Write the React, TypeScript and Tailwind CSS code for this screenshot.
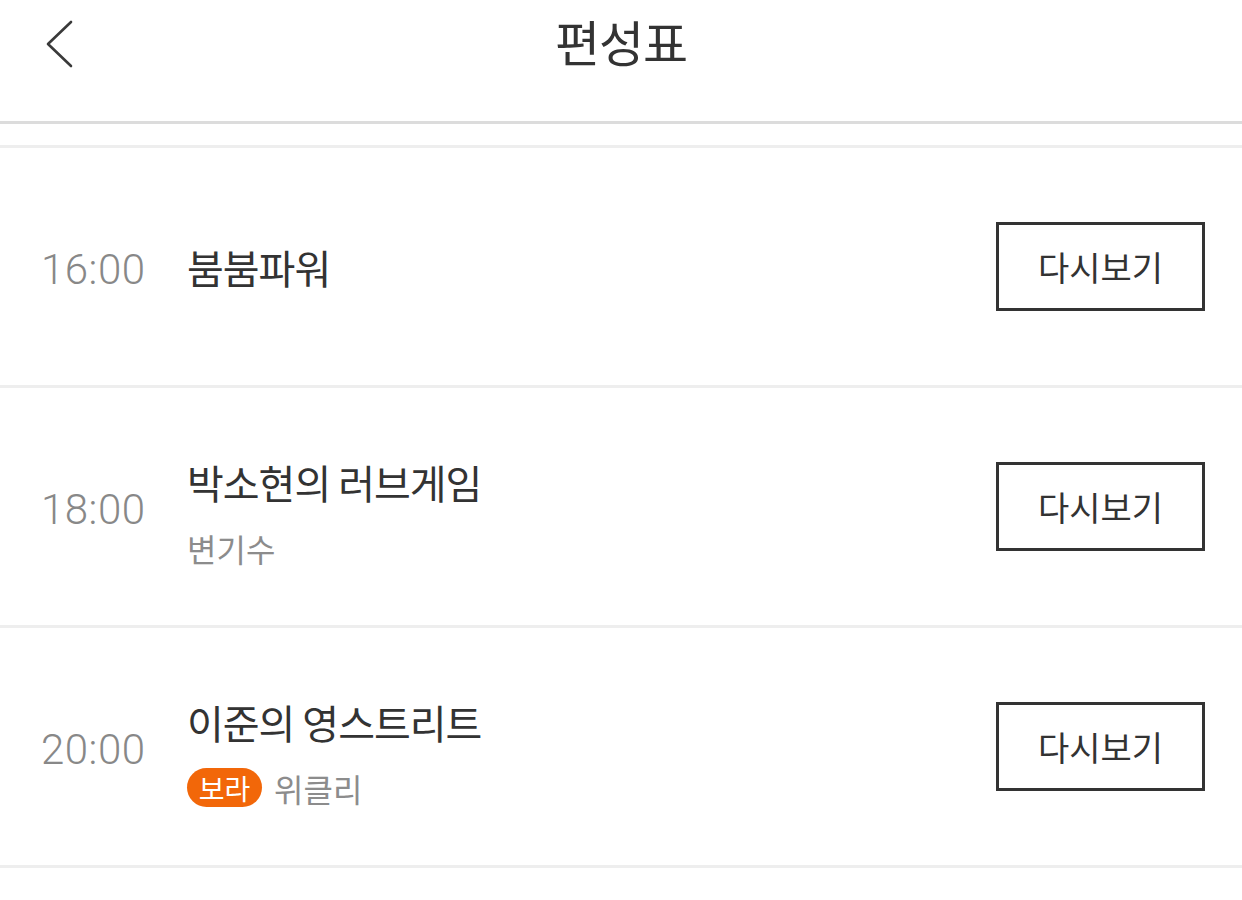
import React from "react";

type Program = {
  time: string;
  title: string;
  badge?: string;
  sub?: string;
};

const programs: Program[] = [
  { time: "16:00", title: "붐붐파워" },
  { time: "18:00", title: "박소현의 러브게임", sub: "변기수" },
  { time: "20:00", title: "이준의 영스트리트", badge: "보라", sub: "위클리" },
];

const kr = { fontFamily: '"Noto Sans CJK KR", "Noto Sans", sans-serif' };

function BackIcon() {
  return (
    <svg width="30" height="50" viewBox="0 0 30 50" className="block">
      <polyline
        points="25,3 2,25 25,47"
        fill="none"
        stroke="#3a3a3a"
        strokeWidth="2.6"
        strokeLinecap="round"
        strokeLinejoin="round"
      />
    </svg>
  );
}

function ProgramRow({ p }: { p: Program }) {
  return (
    <div className="flex h-[240px] items-center border-b-[3px] border-[#eeeeee] pl-[41px] pr-[37px]">
      <div
        className="w-[146px] pt-[6px] text-[42px] font-light text-[#888888] tracking-[0.5px]"
        style={{ fontFamily: "Roboto, sans-serif" }}
      >
        {p.time}
      </div>
      <div className={`flex flex-1 flex-col ${p.sub ? "pt-[12px]" : ""}`}>
        <div className="text-[40px] leading-[48px] tracking-[-1px] text-[#333333]">{p.title}</div>
        {p.sub && (
          <div className="mt-[22px] flex items-center gap-[12px]">
            {p.badge && (
              <span className="flex h-[39px] w-[75px] items-center justify-center rounded-full bg-[#f26709] text-[28px] leading-none text-white">
                {p.badge}
              </span>
            )}
            <span className="text-[32px] leading-[40px] text-[#8c8c8c]">{p.sub}</span>
          </div>
        )}
      </div>
      <button className="flex h-[89px] w-[209px] items-center justify-center border-[3px] border-[#333333] bg-white text-[34px] text-[#333333]">
        다시보기
      </button>
    </div>
  );
}

export default function App() {
  return (
    <div className="min-h-[900px] w-[1242px] bg-white" style={kr}>
      <div className="relative flex h-[121px] items-center justify-center">
        <div className="absolute left-[46px] top-[19px]">
          <BackIcon />
        </div>
        <h1 className="pb-[40px] text-[49px] font-normal tracking-[-1px] text-[#333333]">편성표</h1>
      </div>
      <div className="h-[3px] bg-[#dcdcdc]" />
      <div className="h-[21px]" />
      <div className="h-[3px] bg-[#eeeeee]" />
      {programs.map((p) => (
        <ProgramRow key={p.time} p={p} />
      ))}
    </div>
  );
}
